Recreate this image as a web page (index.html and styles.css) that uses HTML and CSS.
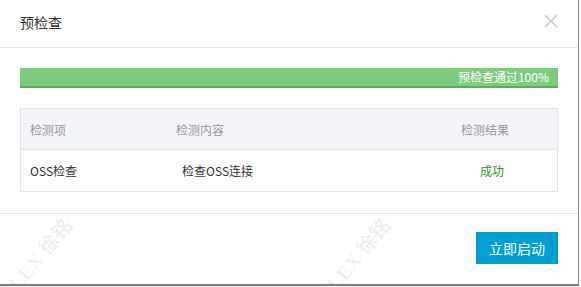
FILE: index.html
```html
<!DOCTYPE html>
<html lang="zh-CN">
<head>
<meta charset="utf-8">
<title>预检查</title>
<link rel="stylesheet" href="styles.css">
</head>
<body>
<div class="dialog">
  <div class="dialog-header">
    <span class="dialog-title">预检查</span>
    <svg class="close" width="14" height="14" viewBox="0 0 14 14"><path d="M1 1L13 13M13 1L1 13" stroke="#c4c4c4" stroke-width="1.3" fill="none"/></svg>
  </div>
  <div class="dialog-body">
    <div class="progress"><span class="progress-text">预检查通过100%</span></div>
    <div class="table">
      <div class="row head">
        <div class="cell c1">检测项</div>
        <div class="cell c2">检测内容</div>
        <div class="cell c3">检测结果</div>
      </div>
      <div class="row body-row">
        <div class="cell c1">OSS检查</div>
        <div class="cell c2 in">检查OSS连接</div>
        <div class="cell c3 in ok">成功</div>
      </div>
    </div>
  </div>
  <div class="dialog-footer">
    <button class="btn-primary">立即启动</button>
  </div>
  <div class="wm wm1">ALEX 徐铭</div>
  <div class="wm wm2">ALEX 徐铭</div>
</div>
<div class="below"></div>
</body>
</html>
```

FILE: styles.css
```css
html, body {
  margin: 0;
  padding: 0;
  background: #fff;
  font-family: "Noto Sans CJK SC", "Noto Sans", sans-serif;
  overflow: hidden;
}
.dialog {
  position: relative;
  width: 578px;
  height: 284px;
  background: #fff;
  border-right: 1px solid #8a8a8a;
  border-bottom: 2px solid #7c7c7c;
  display: flex;
  flex-direction: column;
  overflow: hidden;
}
.dialog-header {
  height: 47px;
  border-bottom: 1px solid #e5e5e5;
  display: flex;
  align-items: center;
  justify-content: space-between;
  padding: 0 20px;
  flex-shrink: 0;
}
.dialog-title {
  font-size: 14px;
  color: #333;
  margin-top: -4px;
}
.close {
  margin-top: -6px;
}
.dialog-body {
  padding: 20px 20px 21px;
}
.progress {
  height: 18px;
  background: #7dcc7d;
  border-bottom: 2px solid #62a862;
  display: flex;
  align-items: center;
  justify-content: flex-end;
  padding-right: 9px;
}
.progress-text {
  color: #fff;
  font-size: 12px;
  line-height: 18px;
}
.table {
  margin-top: 20px;
  border: 1px solid #e2e5ea;
  font-size: 12px;
}
.row {
  display: grid;
  grid-template-columns: 145px 285px 1fr;
  align-items: center;
}
.row.head {
  height: 40px;
  background: #f4f5f9;
  color: #999;
  border-bottom: 1px solid #e2e5ea;
}
.row.body-row {
  height: 41px;
  color: #333;
}
.cell {
  padding-left: 9px;
}
.c2 {
  padding-left: 10px;
}
.c2.in {
  padding-left: 16px;
}
.c3 {
  padding-left: 10px;
}
.c3.in {
  padding-left: 29px;
}
.ok {
  color: #1a9e1a;
}
.dialog-footer {
  border-top: 1px solid #e5e5e5;
  display: flex;
  justify-content: flex-end;
  padding: 18px 20px 20px;
}
.btn-primary {
  width: 82px;
  height: 32px;
  border: none;
  background: #00a0d2;
  color: #fff;
  font-family: "Noto Sans CJK SC", sans-serif;
  font-size: 14px;
  padding: 0;
}
.wm {
  position: absolute;
  font-family: "Liberation Serif", "Noto Sans CJK SC", serif;
  font-size: 20px;
  line-height: 20px;
  font-weight: bold;
  color: rgba(0, 0, 0, 0.08);
  transform: rotate(-50deg);
  transform-origin: left top;
  white-space: nowrap;
  pointer-events: none;
}
.wm1 {
  left: -4px;
  top: 292px;
}
.wm2 {
  left: 314px;
  top: 292px;
}
.below {
  height: 2px;
  background: #f0f0f0;
}
```
